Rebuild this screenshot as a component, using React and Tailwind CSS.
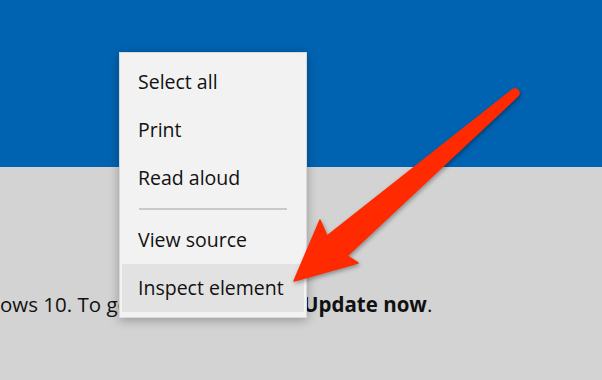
import React from 'react'

const items = [
  { label: 'Select all' },
  { label: 'Print' },
  { label: 'Read aloud' },
  { divider: true },
  { label: 'View source' },
  { label: 'Inspect element', active: true },
]

function Arrow() {
  return (
    <svg
      className="absolute left-0 top-0 drop-shadow-[1px_2px_2px_rgba(0,0,0,0.35)]"
      width="602"
      height="380"
      viewBox="0 0 602 380"
    >
      <path
        d="M327 236 L320 220 L294 281 L358 263 L347 256 L517.6 96.1 A4 4 0 0 0 512.4 89.9 Z"
        fill="#ff2a00"
        stroke="#ff2a00"
        strokeWidth="1.5"
        strokeLinejoin="round"
      />
    </svg>
  )
}

export default function App() {
  return (
    <div
      className="relative w-[602px] h-[380px] overflow-hidden bg-[#d3d3d3]"
      style={{ fontFamily: '"Open Sans", "Noto Sans", sans-serif' }}
    >
      <div className="h-[167px] bg-[#0063b1]" />

      <div className="pt-[123px] text-[20.5px] leading-[28px] text-[#111] whitespace-nowrap">
        ows 10. To get the update, click <span className="font-bold">Update now</span>.
      </div>

      {/* Context menu */}
      <div className="absolute left-[119px] top-[52px] w-[188px] bg-[#f2f2f2] border border-[#d9d9d9] shadow-[0_2px_10px_rgba(0,0,0,0.3)] py-[5px]">
        {items.map((item, i) =>
          item.divider ? (
            <div key={i} className="h-[14px] flex items-center px-[19px]">
              <div className="h-[2px] w-full bg-[#c9c9c9]" />
            </div>
          ) : (
            <div
              key={i}
              className={`h-[48px] flex items-center text-[19.5px] text-[#111] ${
                item.active ? 'bg-[#e2e2e2] mx-[2px] pl-[16px]' : 'pl-[18px]'
              }`}
            >
              {item.label}
            </div>
          )
        )}
      </div>

      <Arrow />
    </div>
  )
}
